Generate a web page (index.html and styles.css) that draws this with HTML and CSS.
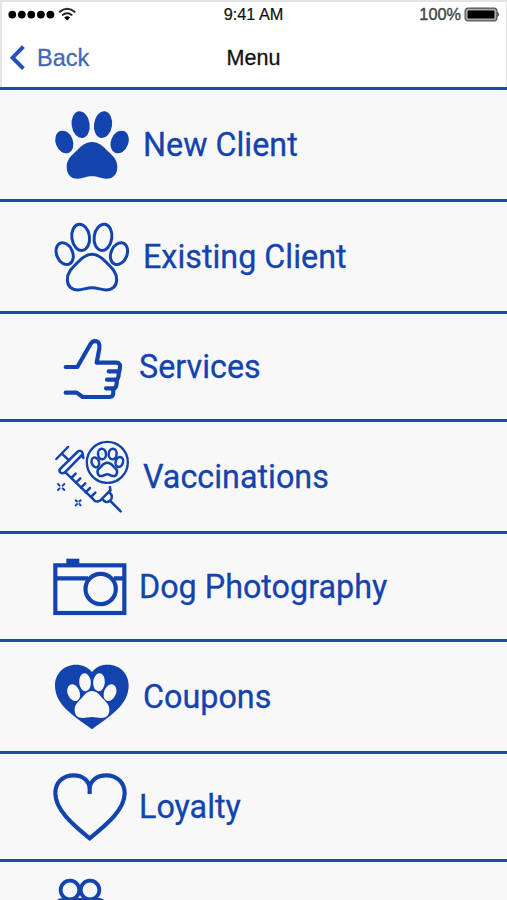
FILE: index.html
```
<!DOCTYPE html>
<html lang="en">
<head>
    <meta charset="UTF-8">
    <meta name="viewport" content="width=device-width, initial-scale=1.0">
    <title>Menu</title>
    <link rel="stylesheet" href="styles.css">
</head>
<body>
    <header class="header">
        <div class="status-bar">
            <div class="signal">
                <svg width="70" height="16" viewBox="0 0 70 16">
                    <g fill="#000">
                        <circle cx="5.3" cy="7.6" r="3.9"/>
                        <circle cx="14.8" cy="7.6" r="3.9"/>
                        <circle cx="24.3" cy="7.6" r="3.9"/>
                        <circle cx="33.9" cy="7.6" r="3.9"/>
                        <circle cx="43.4" cy="7.6" r="3.9"/>
                    </g>
                    <g fill="none" stroke="#222" stroke-width="1.9">
                        <path d="M52.2 5.3 Q60.2 -1.6 68.2 5.3"/>
                        <path d="M55.1 8.4 Q60.2 4 65.3 8.4"/>
                    </g>
                    <path d="M57.2 10.4 Q60.2 8 63.2 10.4 L60.2 13.4Z" fill="#000"/>
                </svg>
            </div>
            <span class="time">9:41 AM</span>
            <div class="battery">
                <span>100%</span>
                <svg width="36" height="16" viewBox="0 0 36 16">
                    <rect x="1.1" y="1.1" width="31.8" height="12.8" rx="3" fill="#aaa" stroke="#555" stroke-width="1.2"/>
                    <rect x="3.6" y="3.4" width="26.8" height="8.2" rx="1" fill="#000"/>
                    <path d="M33.5 4.6 Q36 7.5 33.5 10.4Z" fill="#111"/>
                </svg>
            </div>
        </div>
        <nav class="nav-bar">
            <a class="back" href="#">
                <svg width="17" height="28" viewBox="0 0 17 28">
                    <path d="M14.4 2.6 L3.6 13.7 L14.4 24.6" fill="none" stroke="#2450b0" stroke-width="4"/>
                </svg>
                <span>Back</span>
            </a>
            <h1>Menu</h1>
        </nav>
    </header>

    <main class="menu">
        <a class="menu-item" href="#">
            <svg class="icon solid" viewBox="30 3 240 291">
                <ellipse cx="73" cy="141" rx="26" ry="35" transform="rotate(-21 73 141)"/>
                <ellipse cx="122" cy="89" rx="27" ry="40.5" transform="rotate(-8 122 89)"/>
                <ellipse cx="189" cy="89" rx="27" ry="40.5" transform="rotate(8 189 89)"/>
                <ellipse cx="239" cy="141" rx="26" ry="35" transform="rotate(21 239 141)"/>
                <path d="M156 141 C177 141 190 155 202 167 C216 180 232 192 232 215 C232 237 220 251 199 251 C184 251 174 244 156 244 C138 244 128 251 113 251 C92 251 80 237 80 215 C80 192 96 180 110 167 C122 155 135 141 156 141Z"/>
            </svg>
            <span>New Client</span>
        </a>

        <a class="menu-item" href="#">
            <svg class="icon line" viewBox="30 -6 240 291">
                <g stroke-width="9">
                    <ellipse cx="74" cy="131" rx="24" ry="34" transform="rotate(-23 74 131)"/>
                    <ellipse cx="122" cy="82" rx="26.5" ry="39.5" transform="rotate(-8 122 82)"/>
                    <ellipse cx="189" cy="82" rx="26.5" ry="39.5" transform="rotate(8 189 82)"/>
                    <ellipse cx="237" cy="131" rx="24" ry="34" transform="rotate(23 237 131)"/>
                    <path d="M156 133 C175 133 189 146 200 158 C214 172 230 186 230 209 C230 229 216 240 198 240 C183 240 174 233 156 233 C138 233 129 240 114 240 C96 240 82 229 82 209 C82 186 98 172 112 158 C123 146 137 133 156 133Z"/>
                </g>
            </svg>
            <span>Existing Client</span>
        </a>

        <a class="menu-item short" href="#">
            <svg class="icon line" viewBox="30 -21 240 291">
                <g stroke-width="12.5">
                    <path d="M77 126 H112 L151 58 C156 49 163 47 170 49 C180 52 179 62 178 71 L170 113 H229 C238 113 242 120 240 128 L238 139 H206"/>
                    <path d="M237 140 C235 149 238 158 230 164 H201"/>
                    <path d="M231 165 C229 175 232 184 224 190 H198"/>
                    <path d="M220 191 C218 198 225 216 208 216 H128 L110 203 H77"/>
                </g>
            </svg>
            <span>Services</span>
        </a>

        <a class="menu-item" href="#">
            <svg class="icon line" viewBox="30 -6 240 291">
                <circle cx="202" cy="97" r="61.5" stroke-width="7"/>
                <g stroke-width="7.5">
                    <ellipse cx="166" cy="97" rx="11" ry="15" transform="rotate(-18 166 97)"/>
                    <ellipse cx="186" cy="72" rx="12" ry="16" transform="rotate(-6 186 72)"/>
                    <ellipse cx="218" cy="72" rx="12" ry="16" transform="rotate(6 218 72)"/>
                    <ellipse cx="238" cy="96" rx="11" ry="15" transform="rotate(18 238 96)"/>
                    <path d="M202 98 C217 98 217 109 226 115 C236 123 231 139 219 138 C211 137 209 133 202 133 C195 133 193 137 185 138 C173 139 168 123 178 115 C187 109 187 98 202 98Z"/>
                </g>
                <g stroke-width="7.5">
                    <path d="M49 87 L84 51 M65 70 L87 91"/>
                    <path d="M130 84 L128 70 C127 62 118 60 112 66 L59 118 C56 128 66 132 74 128 L126 75"/>
                    <path d="M77 128 L161 209 C166 216 174 215 181 211 L211 181"/>
                    <path d="M94 144 L107 131 M108 158 L121 145 M123 173 L136 160 M137 187 L150 174 M153 201 L166 188"/>
                    <path d="M211 181 L210 171 M206 187 C217 191 219 204 210 212 C203 219 193 216 189 209"/>
                    <path d="M211 213 L242 244"/>
                </g>
                <g stroke-width="6">
                    <path d="M54 162 L59 167 M73 162 L68 167 M54 180 L59 175 M73 180 L68 175"/>
                    <path d="M107 211 L111 214 M122 211 L118 214 M107 226 L111 222 M122 226 L118 222"/>
                </g>
            </svg>
            <span>Vaccinations</span>
        </a>

        <a class="menu-item short" href="#">
            <svg class="icon" viewBox="30 -21 240 291">
                <rect class="fill" x="79" y="41" width="39" height="19"/>
                <g class="outline" stroke-width="12.5">
                    <rect x="46" y="61" width="207" height="143"/>
                    <path d="M45 100 H144 M222 100 H253"/>
                    <circle cx="182" cy="132" r="45.5"/>
                </g>
            </svg>
            <span>Dog Photography</span>
        </a>

        <a class="menu-item" href="#">
            <svg class="icon solid" viewBox="30 -6 240 291">
                <path d="M156 66 C169 49 186 44 204 44 C241 44 266 72 266 106 C266 164 216 194 156 238 C96 194 45 164 45 106 C45 72 71 44 108 44 C127 44 143 50 156 66Z"/>
                <g class="cutout">
                    <ellipse cx="101" cy="128" rx="18" ry="26" transform="rotate(-23 101 128)"/>
                    <ellipse cx="135" cy="97" rx="17.5" ry="27" transform="rotate(-5 135 97)"/>
                    <ellipse cx="177" cy="97" rx="17.5" ry="27" transform="rotate(5 177 97)"/>
                    <ellipse cx="210" cy="128" rx="18" ry="26" transform="rotate(23 210 128)"/>
                    <path d="M156 123 C171 123 179 135 187 145 C196 154 208 162 208 180 C208 195 200 204 184 204 C174 204 166 201 156 201 C146 201 138 204 128 204 C112 204 104 195 104 180 C104 162 116 154 125 145 C133 135 141 123 156 123Z"/>
                </g>
            </svg>
            <span>Coupons</span>
        </a>

        <a class="menu-item short" href="#">
            <svg class="icon" viewBox="30 -6 240 291">
                <path class="outline" stroke-width="12.5" d="M149 102 V88 C149 62 128 46 101 46 C68 46 46 68 46 100 C46 148 95 192 149 235 C203 192 254 148 254 100 C254 68 231 46 199 46 C171 46 149 62 149 88"/>
            </svg>
            <span>Loyalty</span>
        </a>

        <!-- runs on below the bottom of the screen -->
        <a class="menu-item short" href="#">
            <svg class="icon" viewBox="30 318 240 291">
                <g class="outline" stroke-width="11.5">
                    <circle cx="90" cy="390" r="28"/>
                    <circle cx="150" cy="390" r="28"/>
                    <path d="M51 434 Q51 420 70 420 H176 Q191 420 191 434"/>
                </g>
            </svg>
        </a>
    </main>
</body>
</html>
```
FILE: styles.css
```
:root {
    --primary-color: #1343ad;
    --line-color: #2447a2;
    --background-color: #f8f8f8;
}

* {
    box-sizing: border-box;
}

body {
    margin: 0;
    background-color: var(--background-color);
    font-family: Roboto, sans-serif;
}

a {
    color: inherit;
    text-decoration: none;
}

.header {
    height: 87px;
    background-color: white;
    border: 2px solid #e4e4e4;
    border-right-width: 1px;
    border-bottom: none;
    font-family: "Liberation Sans", Arial, sans-serif;
    color: #111;
}

.status-bar {
    display: grid;
    grid-template-columns: 1fr auto 1fr;
    align-items: center;
    height: 25px;
    padding: 0 6px 0 5px;
    font-size: 16.3px;
    -webkit-text-stroke: 0.2px;
}

.signal svg,
.battery svg {
    display: block;
}

.battery {
    display: flex;
    justify-content: flex-end;
    align-items: center;
    gap: 3px;
    color: #444;
    -webkit-text-stroke: 0.4px;
}

.nav-bar {
    display: grid;
    grid-template-columns: 1fr auto 1fr;
    align-items: center;
    height: 60px;
    padding: 2px 8px 0 7px;
}

.back {
    display: flex;
    align-items: center;
    gap: 11px;
    color: #4667b8;
    font-size: 23.5px;
    -webkit-text-stroke: 0.3px;
}

h1 {
    margin: 0;
    font-size: 21.5px;
    font-weight: normal;
    -webkit-text-stroke: 0.3px;
}

.menu {
    height: 813px;
    overflow: hidden;
}

.menu-item {
    display: flex;
    align-items: center;
    gap: 13px;
    height: 112px;
    padding-left: 50px;
    border-top: 3px solid var(--line-color);
    color: var(--primary-color);
    font-size: 32.3px;
    white-space: nowrap;
    -webkit-text-stroke: 0.3px;
}

.menu-item.short {
    gap: 9px;
    height: 108px;
}

.icon {
    flex: none;
    width: 80px;
    height: 97px;
}

.solid,
.fill {
    fill: var(--primary-color);
}

.line,
.outline {
    fill: none;
    stroke: var(--primary-color);
}

.line {
    stroke-linecap: round;
    stroke-linejoin: round;
}

.cutout {
    fill: var(--background-color);
}
```
